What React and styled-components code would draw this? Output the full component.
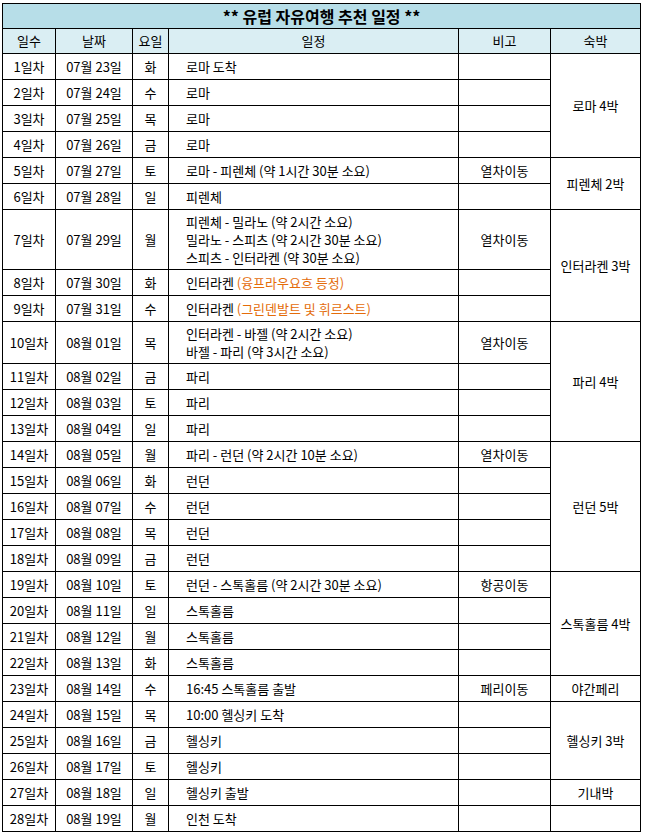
import styled, { createGlobalStyle } from "styled-components";

const GlobalStyle = createGlobalStyle`
  body {
    margin: 0;
    background: #fff;
    font-family: "Noto Sans CJK KR", "Noto Sans", sans-serif;
    color: #000;
  }
`;

const stays = {
  1: { label: "로마 4박", span: 4 },
  5: { label: "피렌체 2박", span: 2 },
  7: { label: "인터라켄 3박", span: 3 },
  10: { label: "파리 4박", span: 4 },
  14: { label: "런던 5박", span: 5 },
  19: { label: "스톡홀름 4박", span: 4 },
  23: { label: "야간페리", span: 1 },
  24: { label: "헬싱키 3박", span: 3 },
  27: { label: "기내박", span: 1 },
  28: { label: "", span: 1 },
};

const weekdays = ["화", "수", "목", "금", "토", "일", "월"];

const plans = {
  1: ["로마 도착"],
  2: ["로마"],
  3: ["로마"],
  4: ["로마"],
  5: ["로마 - 피렌체 (약 1시간 30분 소요)"],
  6: ["피렌체"],
  7: [
    "피렌체 - 밀라노 (약 2시간 소요)",
    "밀라노 - 스피츠 (약 2시간 30분 소요)",
    "스피츠 - 인터라켄 (약 30분 소요)",
  ],
  8: [["인터라켄 ", "(융프라우요흐 등정)"]],
  9: [["인터라켄 ", "(그린덴발트 및 휘르스트)"]],
  10: ["인터라켄 - 바젤 (약 2시간 소요)", "바젤 - 파리 (약 3시간 소요)"],
  11: ["파리"],
  12: ["파리"],
  13: ["파리"],
  14: ["파리 - 런던 (약 2시간 10분 소요)"],
  15: ["런던"],
  16: ["런던"],
  17: ["런던"],
  18: ["런던"],
  19: ["런던 - 스톡홀름 (약 2시간 30분 소요)"],
  20: ["스톡홀름"],
  21: ["스톡홀름"],
  22: ["스톡홀름"],
  23: ["16:45 스톡홀름 출발"],
  24: ["10:00 헬싱키 도착"],
  25: ["헬싱키"],
  26: ["헬싱키"],
  27: ["헬싱키 출발"],
  28: ["인천 도착"],
};

const notes = {
  5: "열차이동",
  7: "열차이동",
  10: "열차이동",
  14: "열차이동",
  19: "항공이동",
  23: "페리이동",
};

const pad = (n) => String(n).padStart(2, "0");

const days = Array.from({ length: 28 }, (_, i) => {
  const day = i + 1;
  const july = 23 + i;
  const date =
    july <= 31 ? `07월 ${pad(july)}일` : `08월 ${pad(july - 31)}일`;
  return {
    day,
    date,
    weekday: weekdays[i % 7],
    plan: plans[day],
    note: notes[day] || "",
    stay: stays[day],
  };
});

const App = () => {
  return (
    <>
      <GlobalStyle />
      <Table>
        <colgroup>
          <col style={{ width: 53 }} />
          <col style={{ width: 77 }} />
          <col style={{ width: 36 }} />
          <col style={{ width: 290 }} />
          <col style={{ width: 92 }} />
          <col style={{ width: 90 }} />
        </colgroup>
        <thead>
          <tr>
            <TitleCell colSpan={6}>** 유럽 자유여행 추천 일정 **</TitleCell>
          </tr>
          <tr>
            <HeadCell>일수</HeadCell>
            <HeadCell>날짜</HeadCell>
            <HeadCell>요일</HeadCell>
            <HeadCell>일정</HeadCell>
            <HeadCell>비고</HeadCell>
            <HeadCell>숙박</HeadCell>
          </tr>
        </thead>
        <tbody>
          {days.map((d) => (
            <Row key={d.day}>
              <Cell>{d.day}일차</Cell>
              <Cell>{d.date}</Cell>
              <Cell>{d.weekday}</Cell>
              <Cell $align="left">
                {d.plan.map((line, i) => (
                  <Line key={i}>
                    {Array.isArray(line) ? (
                      <>
                        {line[0]}
                        <Accent>{line[1]}</Accent>
                      </>
                    ) : (
                      line
                    )}
                  </Line>
                ))}
              </Cell>
              <Cell>{d.note}</Cell>
              {d.stay && <Cell rowSpan={d.stay.span}>{d.stay.label}</Cell>}
            </Row>
          ))}
        </tbody>
      </Table>
    </>
  );
};

const Table = styled.table`
  margin: 3px 0 0 2px;
  width: 639px;
  table-layout: fixed;
  border-collapse: collapse;
  font-size: 13px;
  line-height: 18px;
`;

const TitleCell = styled.th`
  height: 24px;
  padding: 0;
  border: 1px solid #000;
  background: #b7dee8;
  font-size: 16px;
  font-weight: 700;
  line-height: 18px;
  text-align: center;
  vertical-align: middle;
`;

const HeadCell = styled.th`
  height: 24px;
  padding: 0;
  border: 1px solid #000;
  background: #daeef3;
  font-weight: 400;
  font-size: 13px;
  line-height: 18px;
  text-align: center;
  vertical-align: middle;
`;

const Row = styled.tr`
  height: 26px;
`;

const Cell = styled.td`
  padding: ${(p) => (p.$align === "left" ? "3px 4px 2px 17px" : "2px")};
  border: 1px solid #000;
  text-align: ${(p) => p.$align || "center"};
  vertical-align: middle;
  white-space: nowrap;
`;

const Line = styled.div`
  line-height: 18px;
`;

const Accent = styled.span`
  color: #e46c0a;
`;

export default App;
